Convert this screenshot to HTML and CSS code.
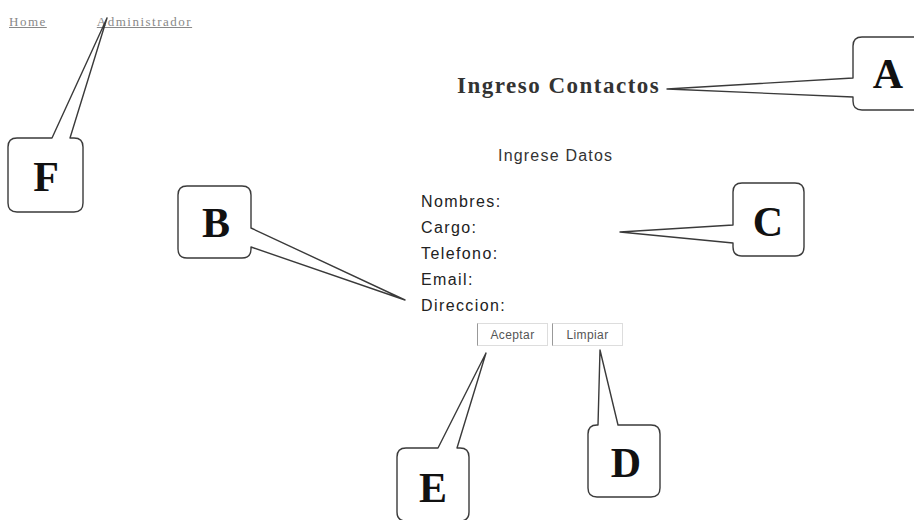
FILE: index.html
```html
<!DOCTYPE html>
<html lang="es">
<head>
<meta charset="UTF-8">
<meta name="viewport" content="width=device-width, initial-scale=1.0">
<title>Ingreso Contactos</title>
<link rel="stylesheet" href="styles.css">
</head>
<body>
<div class="nav">
    <a href="#">Home</a>
    <a href="#" class="admin">Administrador</a>
</div>

<h1 class="title">Ingreso Contactos</h1>

<form class="datos">
    <div class="subtitle">Ingrese Datos</div>
    <div class="fields">
        <label>Nombres:</label>
        <label>Cargo:</label>
        <label>Telefono:</label>
        <label>Email:</label>
        <label>Direccion:</label>
    </div>
    <div class="botones">
        <button type="button">Aceptar</button>
        <button type="reset">Limpiar</button>
    </div>
</form>

<!-- callouts of the manual figure -->
<svg class="callouts" width="914" height="520" viewBox="0 0 914 520">
    <g class="shape">
        <path d="M853,78 V46 Q853,37 862,37 H914 Q923,37 923,46 V101 Q923,110 914,110 H862 Q853,110 853,101 V97 L667,89 Z"/>
        <path d="M52,138 L107,18 L70,138 H74 Q83,138 83,147 V203 Q83,212 74,212 H17 Q8,212 8,203 V147 Q8,138 17,138 Z"/>
        <path d="M251,228 V195 Q251,186 242,186 H187 Q178,186 178,195 V249 Q178,258 187,258 H242 Q251,258 251,249 V247 L405,300 Z"/>
        <path d="M733,225 V192 Q733,183 742,183 H795 Q804,183 804,192 V247 Q804,256 795,256 H742 Q733,256 733,247 V243 L620,232 Z"/>
        <path d="M438,448 L486,353 L457,448 H460 Q469,448 469,457 V512 Q469,521 460,521 H406 Q397,521 397,512 V457 Q397,448 406,448 Z"/>
        <path d="M598,425 L600,350 L618,425 H651 Q660,425 660,434 V488 Q660,497 651,497 H597 Q588,497 588,488 V434 Q588,425 597,425 Z"/>
    </g>
    <g class="letra">
        <text x="888" y="88">A</text>
        <text x="46" y="191">F</text>
        <text x="216" y="237">B</text>
        <text x="768" y="236">C</text>
        <text x="433" y="502">E</text>
        <text x="626" y="477">D</text>
    </g>
</svg>
</body>
</html>
```
FILE: styles.css
```css
body {
    margin: 0;
    background: #fff;
    font-family: "Liberation Sans", Arial, sans-serif;
    color: #222;
}

.nav {
    padding: 14px 0 0 9px;
    display: flex;
    gap: 50px;
    font-family: "Liberation Serif", "Times New Roman", serif;
    font-size: 13px;
    line-height: 16px;
    letter-spacing: 1.5px;
}
.nav a {
    color: #888;
}

.title {
    margin: 42px 0 0 457px;
    font-family: "Liberation Serif", "Times New Roman", serif;
    font-size: 23px;
    line-height: 28px;
    letter-spacing: 1.5px;
    font-weight: bold;
    color: #333;
}

.datos {
    margin: 46px 0 0 421px;
    width: 270px;
    display: flex;
    flex-direction: column;
}

.subtitle {
    padding-left: 77px;
    font-size: 16px;
    line-height: 20px;
    letter-spacing: 1.2px;
    color: #333;
}

.fields {
    margin-top: 23px;
    display: flex;
    flex-direction: column;
}
.fields label {
    font-size: 16px;
    line-height: 26px;
    letter-spacing: 1.4px;
    color: #222;
}

.botones {
    margin: 4px 0 0 56px;
    display: flex;
    gap: 4px;
}
.botones button {
    width: 71px;
    height: 23px;
    padding: 0;
    background: #fff;
    border: 1px solid #ddd;
    border-left: 1px solid #999;
    font-family: "Liberation Sans", Arial, sans-serif;
    font-size: 12px;
    letter-spacing: 0.4px;
    color: #555;
}

.callouts {
    position: absolute;
    left: 0;
    top: 0;
    pointer-events: none;
}
.shape path {
    fill: none;
    stroke: #3a3a3a;
    stroke-width: 1.4;
    stroke-linejoin: round;
}
.letra text {
    font-family: "Liberation Serif", "Times New Roman", serif;
    font-size: 42px;
    font-weight: bold;
    fill: #111;
    text-anchor: middle;
}
```
